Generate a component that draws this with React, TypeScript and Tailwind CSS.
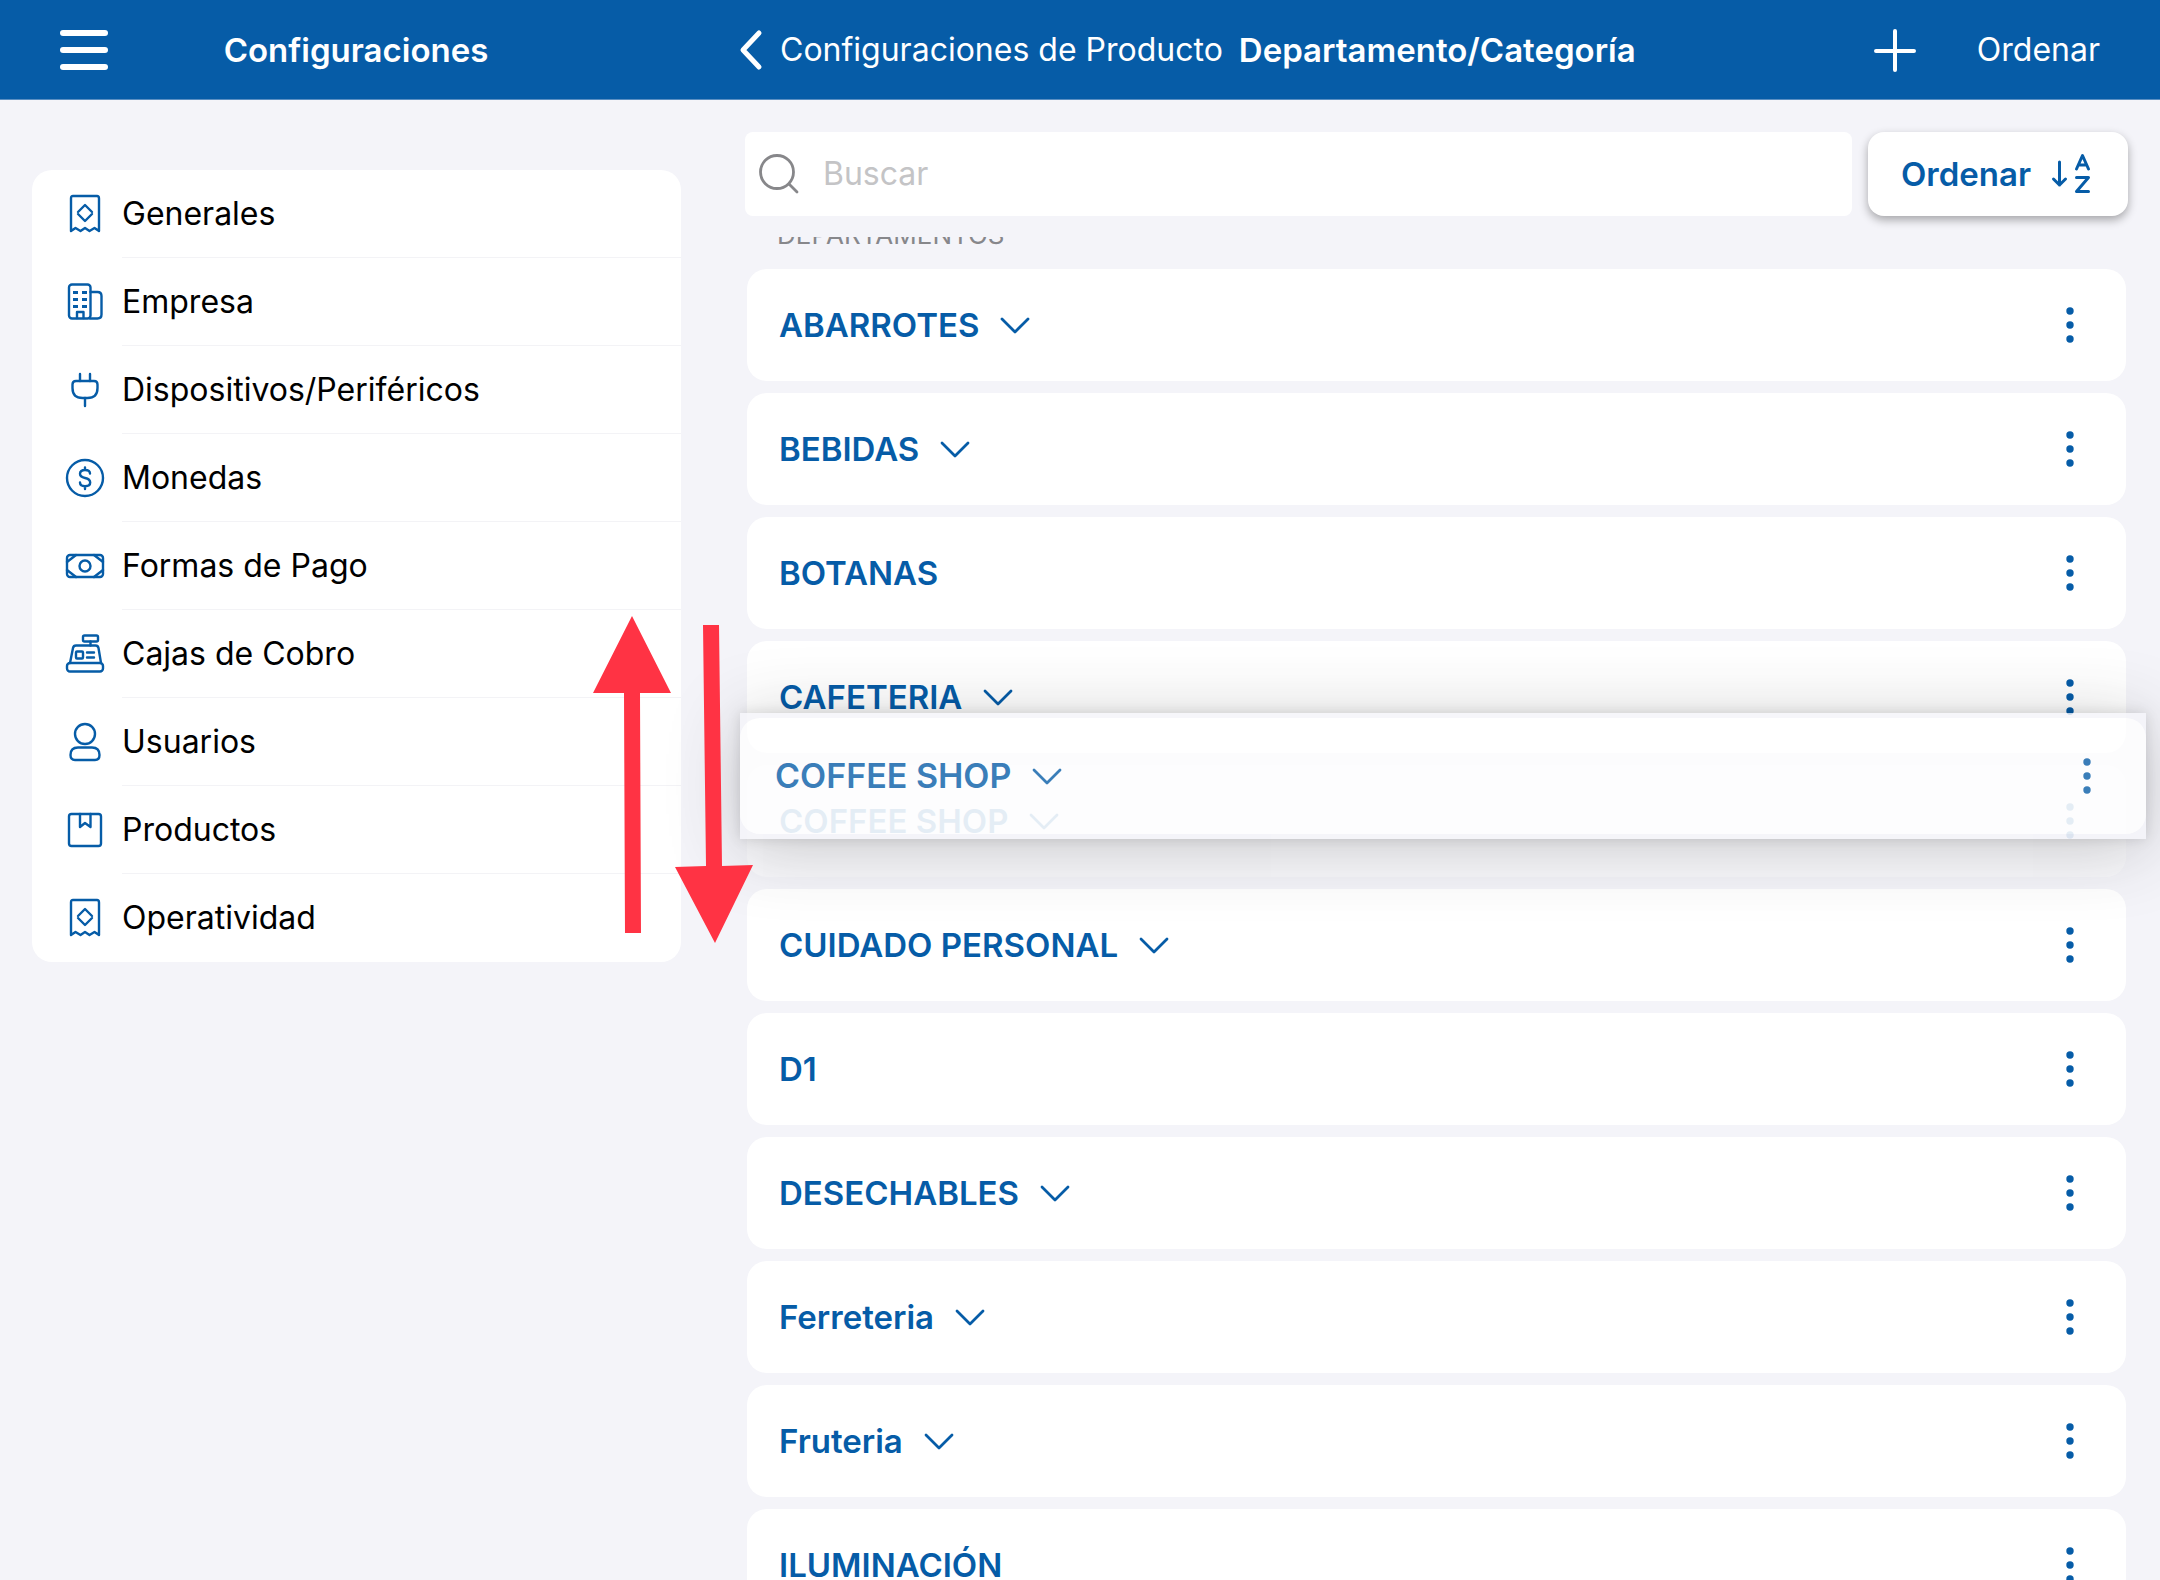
import React from 'react';

const stroke = {
  fill: 'none',
  stroke: 'currentColor',
  strokeWidth: 2.4,
  strokeLinecap: 'round' as const,
  strokeLinejoin: 'round' as const,
};

function MenuIcon({ children }: { children: React.ReactNode }) {
  return (
    <svg viewBox="0 0 40 40" className="size-10 shrink-0 text-[#065ca7]" aria-hidden="true" {...stroke}>
      {children}
    </svg>
  );
}

const receipt = (
  <MenuIcon>
    <path d="M6 37V4.500Q6 2 8 2H32Q34 2 34 4.500V37L29.500 34L24.500 37L20 34L15.500 37L10.500 34Z" />
    <path d="M13 18L20 11L27 18M13 20L20 27L27 20" />
  </MenuIcon>
);

const building = (
  <MenuIcon>
    <rect x="4" y="2.500" width="21.500" height="34" rx="3" />
    <path d="M25.500 10H32.500Q36.500 10 36.500 14V32.500Q36.500 36.500 32.500 36.500H25" />
    <path d="M12 36V30H18.500V36" />
    <path strokeWidth="3" strokeLinecap="butt" d="M8 10.500H13M17 10.500H22M8 17.500H13M17 17.500H22M8 24.500H13M17 24.500H22" />
  </MenuIcon>
);

const plug = (
  <MenuIcon>
    <path d="M11 11H29Q32.500 11 32.500 14.500V18Q32.500 28 22.500 28H17.500Q7.500 28 7.500 18V14.500Q7.500 11 11 11Z" />
    <path d="M15 4V11M25 4V11M20 28V36" />
  </MenuIcon>
);

const coin = (
  <MenuIcon>
    <circle cx="20" cy="20" r="18" />
    <path d="M25 15.500Q25 12 20 12Q15 12 15 15.800Q15 19 20 20Q25.200 21 25.200 24.500Q25.200 28.200 20 28.200Q15 28.200 15 24.500M20 9.500V12M20 28.200V31" />
  </MenuIcon>
);

const bill = (
  <MenuIcon>
    <rect x="2" y="9" width="36" height="22" rx="3" />
    <circle cx="20" cy="20" r="5.500" />
    <path d="M2 16L11 9M2 24L11 31M38 16L29 9M38 24L29 31" />
  </MenuIcon>
);

const register = (
  <MenuIcon>
    <rect x="18" y="1.500" width="15" height="6" rx="1.500" />
    <path d="M25.500 7.500V11.500" />
    <path d="M5 29L8 14Q8.500 11.500 11 11.500H30.500Q33 11.500 33.500 14L36 29" />
    <rect x="2" y="29" width="36" height="8.500" rx="3" />
    <rect x="11" y="17.500" width="7" height="7" rx="1" />
    <path d="M22 18.500H29M22 23.500H29" />
  </MenuIcon>
);

const user = (
  <MenuIcon>
    <circle cx="20" cy="12" r="10" />
    <path d="M13 25.500H27Q34.500 25.500 34.500 33Q34.500 38 30 38H10Q5.500 38 5.500 33Q5.500 25.500 13 25.500Z" />
  </MenuIcon>
);

const box = (
  <MenuIcon>
    <rect x="4" y="4" width="32" height="32" rx="2.500" />
    <path d="M15 4V17L20 13L25.500 17V4" />
  </MenuIcon>
);

const menu = [
  { label: 'Generales', icon: receipt },
  { label: 'Empresa', icon: building },
  { label: 'Dispositivos/Periféricos', icon: plug },
  { label: 'Monedas', icon: coin },
  { label: 'Formas de Pago', icon: bill },
  { label: 'Cajas de Cobro', icon: register },
  { label: 'Usuarios', icon: user },
  { label: 'Productos', icon: box },
  { label: 'Operatividad', icon: receipt },
];

const departments = [
  { name: 'ABARROTES', expandable: true },
  { name: 'BEBIDAS', expandable: true },
  { name: 'BOTANAS', expandable: false },
  { name: 'CAFETERIA', expandable: true },
  { name: 'COFFEE SHOP', expandable: true, dragging: true },
  { name: 'CUIDADO PERSONAL', expandable: true },
  { name: 'D1', expandable: false },
  { name: 'DESECHABLES', expandable: true },
  { name: 'Ferreteria', expandable: true },
  { name: 'Fruteria', expandable: true },
  { name: 'ILUMINACIÓN', expandable: false },
];

function Chevron() {
  return (
    <svg viewBox="0 0 32 20" className="h-5 w-8" aria-hidden="true" {...stroke} strokeWidth={2.8}>
      <path d="M3 4L16 17L29 4" />
    </svg>
  );
}

interface RowProps {
  name: string;
  expandable: boolean;
}

function RowContent({ name, expandable }: RowProps) {
  return (
    <>
      <button type="button" className="flex items-center gap-5 font-semibold">
        {name}
        {expandable && <Chevron />}
      </button>
      <button type="button" aria-label={`Opciones de ${name}`} className="flex w-10 justify-center">
        <svg viewBox="0 0 8 36" className="h-9 w-2 fill-current" aria-hidden="true">
          <circle cx="4" cy="4" r="3.700" />
          <circle cx="4" cy="18" r="3.700" />
          <circle cx="4" cy="32" r="3.700" />
        </svg>
      </button>
    </>
  );
}

function DepartmentRow({ name, expandable, dragging }: RowProps & { dragging?: boolean }) {
  return (
    <li className={dragging ? 'relative z-10' : ''}>
      <div
        className={`flex h-28 items-center justify-between rounded-[20px] bg-white pr-9 pl-8 ${dragging ? 'opacity-45' : ''}`}>
        <RowContent name={name} expandable={expandable} />
      </div>
      {dragging && (
        <div className="absolute -top-[52px] -right-5 -left-[7px] bg-[#f4f4f9] py-[5px] text-[34px] opacity-78 shadow-[0_8px_70px_rgba(0,0,0,0.26),0_0_12px_rgba(0,0,0,0.16)]">
          <div className="flex h-[116px] items-center justify-between rounded-[20px] bg-white pr-[39px] pl-[35px]">
            <RowContent name={name} expandable={expandable} />
          </div>
        </div>
      )}
    </li>
  );
}

export default function App() {
  return (
    <div className="relative flex h-screen flex-col overflow-hidden bg-[#f4f4f9] font-['Inter','Liberation_Sans',sans-serif] text-[32px] leading-10 text-black">
      <header className="flex h-[100px] shrink-0 border-b border-[#5b8fc2] bg-[#065ca7] text-white">
        <div className="relative flex w-1/3 items-center justify-center pr-2">
          <button type="button" aria-label="Menú" className="absolute left-[60px] flex w-12 flex-col gap-[11px]">
            <span className="h-[6px] rounded-full bg-white" />
            <span className="h-[6px] rounded-full bg-white" />
            <span className="h-[6px] rounded-full bg-white" />
          </button>
          <h1 className="text-[33px] font-semibold">Configuraciones</h1>
        </div>
        <div className="flex flex-1 items-center pr-[60px] pl-[18px]">
          <a href="#productos" className="flex items-center gap-4">
            <svg viewBox="0 0 26 42" className="h-[42px] w-[26px]" aria-hidden="true" {...stroke} strokeWidth={5}>
              <path d="M21 4L5 21L21 38" />
            </svg>
            Configuraciones de Producto
          </a>
          <h2 className="ml-4 text-[33px] font-semibold">Departamento/Categoría</h2>
          <button type="button" aria-label="Agregar" className="ml-auto">
            <svg viewBox="0 0 44 44" className="size-11" aria-hidden="true" {...stroke} strokeWidth={4}>
              <path d="M22 3V42M3 23H41" />
            </svg>
          </button>
          <button type="button" className="ml-[60px]">Ordenar</button>
        </div>
      </header>

      <div className="flex flex-1">
        <nav className="w-1/3 pt-[70px] pr-[39px] pl-8">
          <ul className="rounded-[20px] bg-white">
            {menu.map(({ label, icon }, index) => (
              <li key={index}>
                <a href="#" className="flex h-[88px] items-center gap-[17px] pl-[33px]">
                  {icon}
                  <span
                    className={`flex h-full flex-1 items-center ${index < menu.length - 1 ? 'border-b border-[#f3f3f6]' : ''}`}>
                    {label}
                  </span>
                </a>
              </li>
            ))}
          </ul>
        </nav>

        <main className="flex-1 pt-8">
          <div className="flex gap-4 pr-8 pl-[25px]">
            <label className="flex h-[84px] flex-1 items-center gap-[22px] rounded-lg bg-white pl-[14px]">
              <svg viewBox="0 0 42 42" className="size-[42px] text-[#87878a]" aria-hidden="true" {...stroke} strokeWidth={2.8}>
                <circle cx="18" cy="19" r="16.500" />
                <path d="M30 31L38 39" />
              </svg>
              <input
                type="search"
                aria-label="Buscar"
                placeholder="Buscar"
                className="min-w-0 flex-1 outline-none placeholder:text-[#c4c4c6]"
              />
            </label>
            <button
              type="button"
              className="flex h-[84px] items-center gap-[19px] rounded-2xl bg-white pr-9 pl-[33px] text-[33px] font-semibold text-[#065ca7] shadow-[0_4px_10px_rgba(0,0,0,0.32)]">
              Ordenar
              <svg viewBox="0 0 42 42" className="size-[42px]" aria-hidden="true" {...stroke} strokeWidth={3}>
                <path d="M9.500 9V32M3.500 26L9.500 32L15.500 26" />
                <path d="M26.500 16L32.500 2.500L38.500 16M28.500 12H36.500" />
                <path d="M26.500 24.500H38.500L26.500 38.500H38.500" />
              </svg>
            </button>
          </div>

          {/* Section title, mostly scrolled under the search bar */}
          <div className="mt-[21px] flex h-8 items-start overflow-hidden pl-[57px] text-[26px] leading-8 text-[#87878b]">
            <h3 className="-mt-[18px]">DEPARTAMENTOS</h3>
          </div>

          <ul className="flex flex-col gap-3 pr-[34px] pl-[27px] text-[33px] text-[#065ca7]">
            {departments.map((department) => (
              <DepartmentRow key={department.name} {...department} />
            ))}
          </ul>
        </main>
      </div>

      {/* Arrows that show the drag direction */}
      <svg
        viewBox="0 0 160 328"
        className="pointer-events-none absolute top-[616px] left-[593px] z-20 h-[328px] w-40 fill-[#ff3344]"
        aria-hidden="true">
        <path d="M39 0L78 77H47L48 317H32L31 77H0Z" />
        <path d="M110 9H126L129 250L160 249L122 327L82 251L113 250Z" />
      </svg>
    </div>
  );
}
